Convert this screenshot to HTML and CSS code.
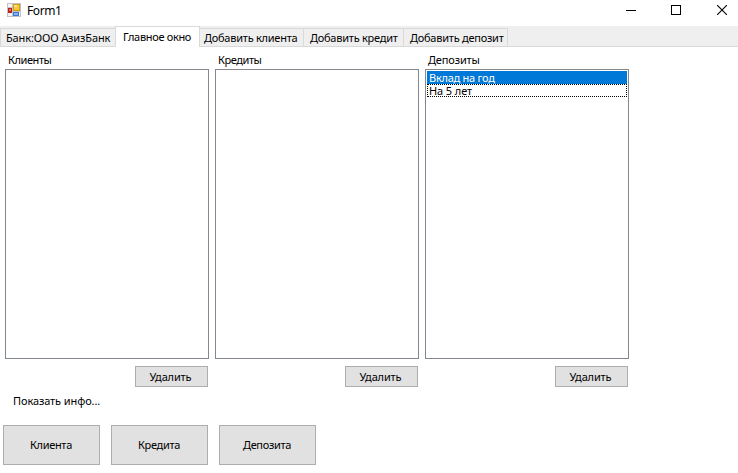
FILE: index.html
```html
<!DOCTYPE html>
<html lang="ru">
<head>
<meta charset="utf-8">
<title>Form1</title>
<link rel="stylesheet" href="styles.css">
</head>
<body>
<header class="titlebar">
  <svg class="app-icon" width="14" height="14" viewBox="0 0 14 14" shape-rendering="crispEdges">
    <rect width="14" height="14" fill="#c3c3c3"/>
    <path d="M1 1h4v3H1zM1 10h4v3H1zM12 9h1v4h-1z" fill="#f4f4f4"/>
    <rect x="1" y="5" width="4" height="5" fill="#b52020"/>
    <rect x="2" y="6" width="2" height="2" fill="#e66a50"/>
    <rect x="6" y="1" width="7" height="7" fill="#d39a12"/>
    <rect x="7" y="2" width="5" height="5" fill="#f8c73a"/>
    <rect x="7" y="2" width="3" height="2" fill="#ffe38a"/>
    <rect x="6" y="9" width="6" height="4" fill="#3d77d6"/>
    <rect x="7" y="10" width="4" height="2" fill="#83b2f5"/>
  </svg>
  <h1 class="title">Form1</h1>
  <div class="controls">
    <svg width="10" height="10" viewBox="0 0 10 10"><path d="M0 5.500h10" stroke="#000"/></svg>
    <svg width="10" height="10" viewBox="0 0 10 10"><rect x=".5" y=".5" width="9" height="9" fill="none" stroke="#000"/></svg>
    <svg class="close" width="10" height="10" viewBox="0 0 10 10"><path d="M0 0l10 10M10 0L0 10" stroke="#000" stroke-width="1.1"/></svg>
  </div>
</header>
<nav class="tabs">
  <div class="tab tab-bank"><span>Банк:ООО АзизБанк</span></div>
  <div class="tab tab-main active"><span>Главное окно</span></div>
  <div class="tab tab-client"><span>Добавить клиента</span></div>
  <div class="tab tab-credit"><span>Добавить кредит</span></div>
  <div class="tab tab-deposit"><span>Добавить депозит</span></div>
</nav>
<main>
  <div class="columns">
    <section class="column">
      <div class="label">Клиенты</div>
      <div class="list"></div>
      <button class="remove">Удалить</button>
    </section>
    <section class="column">
      <div class="label">Кредиты</div>
      <div class="list"></div>
      <button class="remove">Удалить</button>
    </section>
    <section class="column">
      <div class="label label-wide">Депозиты</div>
      <div class="list">
        <div class="item selected">Вклад на год</div>
        <div class="item focused">На 5 лет</div>
      </div>
      <button class="remove">Удалить</button>
    </section>
  </div>
  <div class="info">Показать инфо...</div>
  <div class="actions">
    <button>Клиента</button>
    <button>Кредита</button>
    <button>Депозита</button>
  </div>
</main>
</body>
</html>
```
FILE: styles.css
```css
* { box-sizing: border-box; }
body {
  margin: 0;
  height: 473px;
  overflow: hidden;
  background: #fff;
  color: #000;
  font: 11px/13px "Noto Sans", sans-serif;
  letter-spacing: -0.25px;
  white-space: nowrap;
}
.titlebar { display: flex; height: 26px; padding-left: 7px; }
.app-icon { margin-top: 3px; }
.title {
  margin: 3px 0 0 6px;
  font-size: 12px;
  line-height: 16px;
  font-weight: 400;
  letter-spacing: -0.4px;
}
.controls { display: flex; gap: 35px; margin: 5px 11px 0 auto; }
.close { margin-left: 1px; }
.tabs {
  display: flex;
  align-items: flex-end;
  height: 21px;
  background: #efefef;
  border-bottom: 1px solid #d9d9d9;
}
.tab {
  height: 18px;
  padding: 2px 0 0 6px;
  border: 1px solid #d9d9d9;
  border-width: 1px 1px 0 0;
}
.tab-bank { width: 115px; border-width: 1px 0 0 1px; padding-left: 5px; letter-spacing: -0.13px; }
.tab-main { width: 85px; letter-spacing: -0.32px; }
.tab-client { width: 104px; padding-left: 4px; }
.tab-credit { width: 100px; }
.tab-deposit { width: 104px; }
.tab.active {
  height: 21px;
  margin-bottom: -1px;
  padding: 3px 0 0 7px;
  border-left-width: 1px;
  background: #fff;
}
.columns { display: flex; gap: 6px; padding: 6px 0 0 5px; }
.column { display: flex; flex-direction: column; width: 204px; }
.label { height: 16px; padding-left: 3px; letter-spacing: -0.42px; }
.label-wide { letter-spacing: -0.15px; }
.list { height: 290px; padding: 1px; border: 1px solid #828790; }
.item { height: 13px; padding-left: 2px; line-height: 13px; }
.selected { background: #0078d7; color: #fff; }
.focused { outline: 1px dotted #000; outline-offset: -1px; letter-spacing: -0.1px; }
button {
  padding: 0;
  border: 1px solid #adadad;
  border-radius: 0;
  background: #e1e1e1;
  color: #000;
  font: inherit;
  letter-spacing: -0.33px;
}
.remove {
  align-self: flex-end;
  width: 73px;
  height: 21px;
  margin: 7px 1px 0 0;
  padding-right: 2px;
  letter-spacing: -0.15px;
}
.info { margin: 7px 0 0 13px; letter-spacing: -0.1px; }
.actions { display: flex; gap: 11px; margin: 18px 0 0 3px; }
.actions button { width: 97px; height: 40px; padding: 0 1px 2px 0; }
```
